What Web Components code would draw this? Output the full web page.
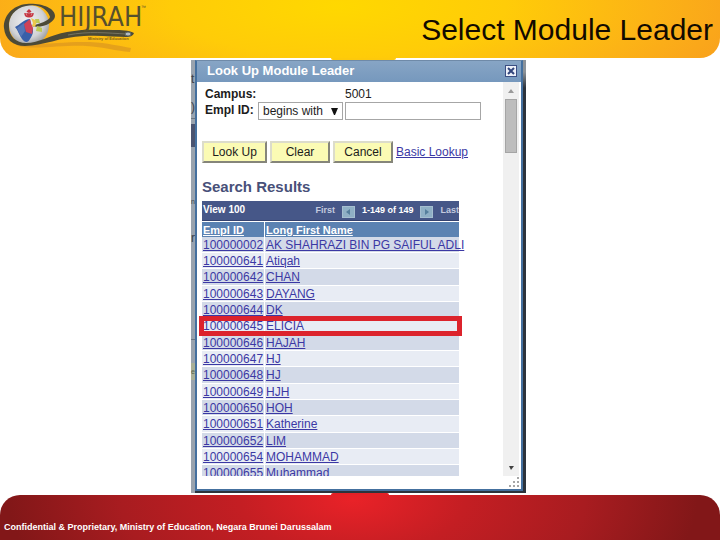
<!DOCTYPE html>
<html lang="en">
<head>
<meta charset="utf-8">
<title>Select Module Leader</title>
<style>
  body {
    margin: 0;
    background: #fff;
    font-family: "Liberation Sans", Arial, sans-serif;
  }
</style>
</head>
<body>
<slide-page>
  <slide-header slot="header">Select Module Leader</slide-header>
  <screen-capture>
    <lookup-dialog heading="Look Up Module Leader">
      <lookup-form campus="5001"></lookup-form>
      <search-results highlight="100000645"></search-results>
    </lookup-dialog>
  </screen-capture>
  <slide-footer slot="footer">Confidential &amp; Proprietary, Ministry of Education, Negara Brunei Darussalam</slide-footer>
</slide-page>

<script>
class SlidePage extends HTMLElement {
  constructor() {
    super();
    const shadow = this.attachShadow({ mode: 'open' });
    shadow.innerHTML = `
      <style>
        :host {
          display: flex;
          flex-direction: column;
          height: 100vh;
        }
        main {
          flex: 1;
          min-height: 0;
          display: flex;
          justify-content: center;
          padding: 2px 3px 2px 0;
        }
      </style>
      <slot name="header"></slot>
      <main><slot></slot></main>
      <slot name="footer"></slot>
    `;
  }
}

class SlideHeader extends HTMLElement {
  constructor() {
    super();
    const shadow = this.attachShadow({ mode: 'open' });
    shadow.innerHTML = `
      <style>
        :host { display: block; }
        header {
          position: relative;
          display: flex;
          justify-content: space-between;
          align-items: center;
          height: 58px;
          padding: 2px 7px 0 0;
          box-sizing: border-box;
          border-radius: 0 0 20px 20px;
          background: radial-gradient(ellipse 58% 220% at 47% 10%, #ffd800 0%, #ffcc08 40%, #fcb316 75%, #f9a11c 100%);
        }
        /* pestaña central que baja sobre la captura */
        header::after {
          content: "";
          position: absolute;
          left: 46%;
          top: 100%;
          width: 9%;
          height: 2px;
          border-radius: 0 0 8px 8px;
          background: #fdc90c;
        }
        h1 {
          margin: 0;
          font-size: 30px;
          font-weight: normal;
          line-height: 34px;
          color: #120a00;
        }
      </style>
      <header>
        <hijrah-logo></hijrah-logo>
        <h1><slot></slot></h1>
      </header>
    `;
  }
}

class HijrahLogo extends HTMLElement {
  constructor() {
    super();
    const shadow = this.attachShadow({ mode: 'open' });
    shadow.innerHTML = `
      <style>
        :host { display: block; }
        svg { display: block; }
        .name { font: 27px "Liberation Sans Narrow", "DejaVu Sans Condensed", sans-serif; }
        .tm { font: 5px "Liberation Sans", sans-serif; }
        .tag { font: bold 4px "Liberation Sans", sans-serif; }
      </style>
      <svg width="150" height="56" viewBox="0 1 150 56" role="img" aria-label="Hijrah">
        <defs>
          <radialGradient id="globe" cx="45%" cy="40%" r="60%">
            <stop offset="0" stop-color="#f1f1f3"/>
            <stop offset="0.7" stop-color="#d2d3d6"/>
            <stop offset="1" stop-color="#9fa1a3"/>
          </radialGradient>
        </defs>
        <path d="M13 41C30 46 62 40 90 41C108 42 119 45 131 47L130 51C116 50 104 46 86 45C62 44 34 49 18 45Z" fill="#d99320" opacity=".65"/>
        <circle cx="29" cy="24" r="20" fill="url(#globe)"/>
        <path d="M27 3C12 4 3 16 4 27C5 38 13 45 25 45C43 45 60 36 84 35C101 34 115 36 126 36C130 36 133 35 134 32C128 29 122 29 113 29C98 28 82 28 67 31C50 34 39 42 26 42C16 42 9 35 9 26C8 16 15 7 26 5C38 2 48 8 50 16C49 20 39 23 31 25C43 28 55 21 55 15C55 7 41 2 27 3Z" fill="#4c4a37"/>
        <path d="M68 34C88 30 108 32 126 33" fill="none" stroke="#77745f" stroke-width="1"/>
        <ellipse cx="128" cy="33" rx="3" ry="2" fill="#b6bdc0" stroke="#56615e"/>
        <path d="M30 18C24 18 20 24 15 26C18 29 19 34 22 38C25 42 28 42 30 38C33 34 34 29 32 26Z" fill="#385fa9"/>
        <path d="M17 27L21 36L25 30L24 22Z" fill="#5375b7"/>
        <path d="M30 18L24 23L26 31L32 33L33 27L31 23Z" fill="#cf4257"/>
        <path d="M31 17L37 20L35 26L32 25L33 22Z" fill="#eec84b"/>
        <path d="M35 18L39 18L40 22L36 22ZM37 25L42 27L42 31L36 30Z" fill="#bdca57"/>
        <path d="M29 9V16M27 11L29 9L31 11M25 12C25 17 33 17 33 12M27 12C27 15 31 15 31 12" fill="none" stroke="#c63540" stroke-width="1.5"/>
        <text class="name" x="59" y="25" fill="#56502d">HIJRAH</text>
        <text class="tm" x="141" y="8" fill="#56502d">™</text>
        <text class="tag" x="88" y="39" fill="#79601d">Ministry of Education</text>
      </svg>
    `;
  }
}

class SlideFooter extends HTMLElement {
  constructor() {
    super();
    const shadow = this.attachShadow({ mode: 'open' });
    shadow.innerHTML = `
      <style>
        :host { display: block; }
        footer {
          position: relative;
          display: flex;
          align-items: center;
          height: 45px;
          padding: 18px 4px 0;
          box-sizing: border-box;
          border-radius: 20px 20px 0 0;
          background: radial-gradient(ellipse 52% 400% at 49% 10%, #e92228 0%, #c41e23 30%, #a81c20 62%, #821718 92%);
          color: #fff;
          font-size: 9px;
          font-weight: bold;
          line-height: 12px;
        }
        footer::before {
          content: "";
          position: absolute;
          left: 46%;
          bottom: 100%;
          width: 8%;
          height: 2px;
          border-radius: 8px 8px 0 0;
          background: #e32127;
        }
      </style>
      <footer><span><slot></slot></span></footer>
    `;
  }
}

// Página oscurecida que asoma a los lados del diálogo
class ScreenCapture extends HTMLElement {
  constructor() {
    super();
    const shadow = this.attachShadow({ mode: 'open' });
    shadow.innerHTML = `
      <style>
        :host {
          display: flex;
          width: min(335px, 100%);
          padding: 0 3px 2px 0;
          box-sizing: border-box;
          background: linear-gradient(#8d9399 0, #8d9399 12px, #2c333c 28px);
        }
        .behind {
          flex: none;
          display: flex;
          flex-direction: column;
          width: 4px;
          margin-bottom: -2px;
          background: #99a3ae;
          color: #39414a;
          font-size: 12px;
          line-height: 14px;
          white-space: nowrap;
        }
        .behind span { margin-top: 12px; }
        .behind span + span { margin-top: 14px; }
        .behind hr {
          width: 100%;
          height: 1px;
          margin: 4px 0 5px;
          border: 0;
          background: #6c7680;
        }
        .behind .head { height: 23px; background: #4a5470; }
        .behind .head + span { margin-top: 48px; font-size: 7px; }
        .behind .head + span + span { margin-top: 22px; }
        .behind span + hr ~ span + hr { margin: 94px 0 23px; }
        .behind .button { background: #a9b096; font-size: 7px; line-height: 17px; color: #59644c; }
        ::slotted(*) { flex: 1; min-width: 0; }
      </style>
      <div class="behind" aria-hidden="true">
        <span>t</span><span>)</span><hr><div class="head"></div>
        <span>n</span><span>r</span><hr><div class="button">e</div>
      </div>
      <slot></slot>
    `;
  }
}

class LookupDialog extends HTMLElement {
  constructor() {
    super();
    const shadow = this.attachShadow({ mode: 'open' });
    shadow.innerHTML = `
      <style>
        :host {
          display: flex;
          flex-direction: column;
          box-sizing: border-box;
          border: 2px solid #44709f;
          border-top: 1px solid #6f8aa8;
          background: #fff;
        }
        .title {
          display: flex;
          justify-content: space-between;
          align-items: center;
          height: 21px;
          padding: 0 4px 2px 10px;
          box-sizing: border-box;
          background: linear-gradient(#87a5c5, #7698bd);
        }
        h2 {
          margin: 0;
          font-size: 13px;
          line-height: 16px;
          color: #fff;
        }
        .close {
          width: 12px;
          height: 12px;
          padding: 0;
          border: 1px solid #3b4f83;
          background: #eef2fa;
        }
        .close svg { display: block; }
        .view {
          flex: 1;
          min-height: 0;
          display: flex;
        }
        .content {
          flex: 1;
          min-width: 0;
          overflow: hidden;
          padding: 4px 0 0 5px;
        }
        .bar {
          display: flex;
          flex-direction: column;
          align-items: center;
          width: 16px;
          margin: 0 2px 0 0;
          background: #f0f0f0;
        }
        .bar svg { flex: none; }
        .thumb {
          width: 12px;
          height: 54px;
          box-sizing: border-box;
          border: 1px solid #a5a5a5;
          background: #bdbdbd;
        }
        .bar svg:last-child { margin-top: auto; }
        .grip {
          display: flex;
          justify-content: flex-end;
          height: 13px;
        }
      </style>
      <div class="title">
        <h2></h2>
        <button class="close" aria-label="Close">
          <svg width="10" height="10"><path d="M2 2L8 8M8 2L2 8" stroke="#33467c" stroke-width="2"/></svg>
        </button>
      </div>
      <div class="view">
        <div class="content"><slot></slot></div>
        <div class="bar">
          <svg width="16" height="17"><path d="M5 11L8 7L11 11Z" fill="#9a9a9a"/></svg>
          <div class="thumb"></div>
          <svg width="16" height="14"><path d="M6 4H11L8 8Z" fill="#404040"/></svg>
        </div>
      </div>
      <div class="grip">
        <svg width="12" height="12" fill="#a6a6a6">
          <path d="M8 1h2v2h-2zM4 5h2v2h-2zM8 5h2v2h-2zM0 9h2v2h-2zM4 9h2v2h-2zM8 9h2v2h-2z"/>
        </svg>
      </div>
    `;
  }

  connectedCallback() {
    this.shadowRoot.querySelector('h2').textContent = this.getAttribute('heading');
  }
}

class LookupForm extends HTMLElement {
  constructor() {
    super();
    const shadow = this.attachShadow({ mode: 'open' });
    shadow.innerHTML = `
      <style>
        :host {
          display: block;
          font-size: 12px;
          color: #1c1c1c;
        }
        .fields {
          display: grid;
          grid-template-columns: 53px 87px 136px;
          grid-template-rows: 16px 18px;
          padding-left: 3px;
          line-height: 16px;
        }
        label, .label { font-weight: bold; white-space: nowrap; }
        output { grid-column: 3; }
        select, input {
          box-sizing: border-box;
          height: 18px;
          margin: 0;
          border: 1px solid #a6a6a6;
          border-radius: 0;
          font: inherit;
          color: inherit;
          background-color: #fff;
        }
        .pick { position: relative; }
        select {
          appearance: none;
          width: 85px;
          padding: 0 0 0 4px;
        }
        .pick svg {
          position: absolute;
          right: 7px;
          top: 6px;
          pointer-events: none;
        }
        input { width: 100%; }
        .actions {
          display: flex;
          align-items: center;
          gap: 3px;
          margin-top: 21px;
        }
        button {
          width: 60px;
          height: 22px;
          padding: 0;
          border: 2px solid;
          border-color: #dcdccb #85857a #85857a #dcdccb;
          background: #fbfbb4;
          font: inherit;
          color: inherit;
        }
        button:first-child { width: 65px; }
        a { color: #3b38a4; }
      </style>
      <div class="fields">
        <span class="label">Campus:</span>
        <output></output>
        <label for="empl">Empl ID:</label>
        <div class="pick">
          <select aria-label="Match"><option>begins with</option></select>
          <svg width="7" height="7"><path d="M0 0H7L4 7H3Z" fill="#111"/></svg>
        </div>
        <input id="empl" type="text">
      </div>
      <div class="actions">
        <button>Look Up</button>
        <button>Clear</button>
        <button>Cancel</button>
        <a href="#basic">Basic Lookup</a>
      </div>
    `;
  }

  connectedCallback() {
    this.shadowRoot.querySelector('output').textContent = this.getAttribute('campus');
  }
}

const people = [
  ['100000002', 'AK SHAHRAZI BIN PG SAIFUL ADLI'],
  ['100000641', 'Atiqah'],
  ['100000642', 'CHAN'],
  ['100000643', 'DAYANG'],
  ['100000644', 'DK'],
  ['100000645', 'ELICIA'],
  ['100000646', 'HAJAH'],
  ['100000647', 'HJ'],
  ['100000648', 'HJ'],
  ['100000649', 'HJH'],
  ['100000650', 'HOH'],
  ['100000651', 'Katherine'],
  ['100000652', 'LIM'],
  ['100000654', 'MOHAMMAD'],
  ['100000655', 'Muhammad']
];

class SearchResults extends HTMLElement {
  constructor() {
    super();
    const shadow = this.attachShadow({ mode: 'open' });
    shadow.innerHTML = `
      <style>
        :host {
          display: block;
          margin-top: 14px;
          padding-right: 44px;
        }
        h3 {
          margin: 0 0 4px;
          font-size: 15px;
          line-height: 20px;
          color: #485079;
        }
        .pager {
          display: flex;
          align-items: center;
          gap: 7px;
          height: 20px;
          padding: 0 0 2px 1px;
          box-sizing: border-box;
          background: #465788;
          border-bottom: 1px solid #35426f;
          color: #fff;
          font-size: 9px;
          font-weight: bold;
          line-height: 14px;
          white-space: nowrap;
        }
        .pager a {
          margin-right: auto;
          font-size: 10px;
          color: inherit;
          text-decoration: none;
        }
        .dim { color: #c3cadf; }
        .pager button {
          flex: none;
          width: 13px;
          height: 12px;
          margin-top: 4px;
          padding: 0;
          border: 1px solid #a5bfd0;
          background: #8fb0c5;
        }
        .pager svg { display: block; }
        table {
          width: 100%;
          border-collapse: separate;
          border-spacing: 0;
          table-layout: fixed;
          font-size: 12px;
          line-height: 14px;
        }
        th, td {
          height: 15px;
          padding: 0 0 0 1px;
          border-bottom: 1px solid #fff;
          border-right: 1px solid #fff;
          text-align: left;
          white-space: nowrap;
        }
        th:first-child { width: 61px; }
        th:last-child, td:last-child { border-right: 0; }
        th {
          border-top: 1px solid #fff;
          border-bottom: 0;
          background: #5b82b2;
          color: #fff;
          font-size: 11px;
          text-decoration: underline;
        }
        td { background: #e8ecf4; }
        tr:nth-child(odd) td { background: #d3dae8; }
        tr:nth-child(3n) td { height: 16px; }
        td a { color: #3b38a4; }
        /* marco rojo sobre la fila elegida */
        .marked { position: relative; }
        .marked td:last-child::after {
          content: "";
          position: absolute;
          inset: -2px -3px -1px -3px;
          border: 5px solid #dc232c;
          pointer-events: none;
        }
      </style>
      <h3>Search Results</h3>
      <div class="pager">
        <a href="#all">View 100</a>
        <span class="dim">First</span>
        <button aria-label="Previous"><svg width="11" height="10"><path d="M7 2V8L3 5Z" fill="#557f9c"/></svg></button>
        <span>1-149 of 149</span>
        <button aria-label="Next"><svg width="11" height="10"><path d="M4 2V8L8 5Z" fill="#557f9c"/></svg></button>
        <span class="dim">Last</span>
      </div>
      <table>
        <thead><tr><th>Empl ID</th><th>Long First Name</th></tr></thead>
        <tbody></tbody>
      </table>
    `;
  }

  connectedCallback() {
    const marked = this.getAttribute('highlight');
    this.shadowRoot.querySelector('tbody').innerHTML = people.map(([id, name]) => `
      <tr${id === marked ? ' class="marked"' : ''}>
        <td><a href="#${id}">${id}</a></td>
        <td><a href="#${id}">${name}</a></td>
      </tr>`).join('');
  }
}

customElements.define('slide-page', SlidePage);
customElements.define('hijrah-logo', HijrahLogo);
customElements.define('slide-header', SlideHeader);
customElements.define('slide-footer', SlideFooter);
customElements.define('screen-capture', ScreenCapture);
customElements.define('lookup-dialog', LookupDialog);
customElements.define('lookup-form', LookupForm);
customElements.define('search-results', SearchResults);
</script>
</body>
</html>
